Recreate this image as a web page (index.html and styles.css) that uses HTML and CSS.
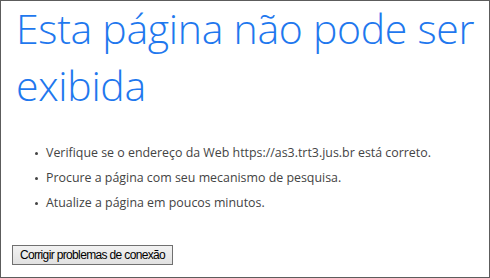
FILE: index.html
```html
<!DOCTYPE html>
<html lang="pt-BR">
<head>
<meta charset="utf-8">
<title>Esta página não pode ser exibida</title>
<link rel="stylesheet" href="styles.css">
</head>
<body>
<div class="frame">
  <h1 class="title">Esta página não pode ser exibida</h1>
  <ul class="tips">
    <li>Verifique se o endereço da Web https://as3.trt3.jus.br está correto.</li>
    <li>Procure a página com seu mecanismo de pesquisa.</li>
    <li>Atualize a página em poucos minutos.</li>
  </ul>
  <div class="actions">
    <button class="fix-btn" type="button">Corrigir problemas de conexão</button>
  </div>
</div>
</body>
</html>
```

FILE: styles.css
```css
html, body {
  margin: 0;
  padding: 0;
  background: #ffffff;
}

.frame {
  box-sizing: border-box;
  width: 490px;
  height: 278px;
  border: 1px solid #5c5c5c;
  background: #ffffff;
  padding: 0 4px 0 15px;
  display: flex;
  flex-direction: column;
}

.title {
  margin: -1px 0 0 0;
  font-family: "Open Sans", "Noto Sans", sans-serif;
  font-weight: 300;
  font-size: 41px;
  line-height: 57px;
  color: #1f78ee;
  letter-spacing: -0.3px;
}

.tips {
  margin: 31px 0 0 0;
  padding: 0 0 0 30px;
  list-style: none;
  font-family: "Open Sans", "Noto Sans", sans-serif;
  font-size: 12.4px;
  color: #444444;
}

.tips li {
  position: relative;
  line-height: 16px;
  margin-bottom: 9px;
}

.tips li::before {
  content: "";
  position: absolute;
  left: -11px;
  top: 7px;
  width: 3px;
  height: 3px;
  border-radius: 50%;
  background: #444444;
}

.actions {
  margin-top: 25px;
}

.fix-btn {
  margin-left: -4px;
  box-sizing: border-box;
  width: 161px;
  height: 20px;
  padding: 0;
  white-space: nowrap;
  font-family: "Liberation Sans", Arial, sans-serif;
  font-size: 12px;
  letter-spacing: -0.65px;
  color: #000000;
  background: linear-gradient(#f2f2f2, #e1e1e1);
  border: 1px solid #707070;
  border-radius: 0;
}
```
